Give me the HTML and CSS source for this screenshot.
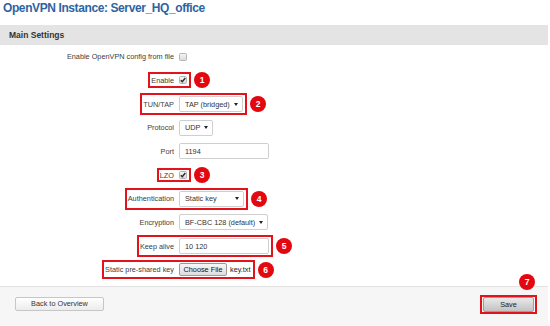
FILE: index.html
```html
<!DOCTYPE html>
<html lang="en">
<head>
    <meta charset="UTF-8">
    <title>OpenVPN Instance: Server_HQ_office</title>
    <link rel="stylesheet" href="styles.css">
</head>
<body>
    <div class="page">
        <h1 class="title">OpenVPN Instance: Server_HQ_office</h1>
        <div class="section-head">Main Settings</div>

        <div class="fields">
            <div class="row">
                <div class="pair">
                    <div class="lbl"><span>Enable OpenVPN config from file</span></div>
                    <div class="ctl"><span class="cb"></span></div>
                </div>
            </div>

            <div class="row hl">
                <div class="pair">
                    <div class="lbl"><span>Enable</span></div>
                    <div class="ctl tall"><span class="cb on"><svg viewBox="0 0 8 8"><path d="M1.8 4.3 L3.3 5.8 L6.3 2"/></svg></span></div>
                </div>
                <span class="badge">1</span>
            </div>

            <div class="row hl">
                <div class="pair">
                    <div class="lbl"><span>TUN/TAP</span></div>
                    <div class="ctl"><div class="sel w-tun"><span>TAP (bridged)</span><i class="caret"></i></div></div>
                </div>
                <span class="badge">2</span>
            </div>

            <div class="row">
                <div class="pair">
                    <div class="lbl"><span>Protocol</span></div>
                    <div class="ctl"><div class="sel w-proto"><span>UDP</span><i class="caret"></i></div></div>
                </div>
            </div>

            <div class="row">
                <div class="pair">
                    <div class="lbl"><span>Port</span></div>
                    <div class="ctl"><div class="txt">1194</div></div>
                </div>
            </div>

            <div class="row hl">
                <div class="pair">
                    <div class="lbl"><span>LZO</span></div>
                    <div class="ctl"><span class="cb on"><svg viewBox="0 0 8 8"><path d="M1.8 4.3 L3.3 5.8 L6.3 2"/></svg></span></div>
                </div>
                <span class="badge">3</span>
            </div>

            <div class="row hl">
                <div class="pair">
                    <div class="lbl"><span>Authentication</span></div>
                    <div class="ctl"><div class="sel w-auth"><span>Static key</span><i class="caret"></i></div></div>
                </div>
                <span class="badge">4</span>
            </div>

            <div class="row">
                <div class="pair">
                    <div class="lbl"><span>Encryption</span></div>
                    <div class="ctl"><div class="sel w-enc"><span>BF-CBC 128 (default)</span><i class="caret"></i></div></div>
                </div>
            </div>

            <div class="row hl">
                <div class="pair">
                    <div class="lbl"><span>Keep alive</span></div>
                    <div class="ctl"><div class="txt">10 120</div></div>
                </div>
                <span class="badge">5</span>
            </div>

            <div class="row hl">
                <div class="pair">
                    <div class="lbl"><span>Static pre-shared key</span></div>
                    <div class="ctl"><span class="file-btn">Choose File</span><span class="file-name">key.txt</span></div>
                </div>
                <span class="badge">6</span>
            </div>
        </div>

        <div class="footer">
            <span class="btn">Back to Overview</span>
            <div class="save-box">
                <span class="btn btn-save">Save</span>
                <span class="badge badge-save">7</span>
            </div>
        </div>
    </div>
</body>
</html>
```

FILE: styles.css
```css
body {
    margin: 0;
    padding: 0;
    background-color: #fff;
    font-family: "Liberation Sans", Arial, sans-serif;
    color: #404040;
}
.page {
    width: 548px;
}
.title {
    margin: 0;
    height: 25px;
    padding-left: 3px;
    font-size: 12px;
    line-height: 16px;
    letter-spacing: -0.4px;
    font-weight: bold;
    color: #2d64a2;
}
.section-head {
    height: 20px;
    line-height: 20px;
    padding-left: 9px;
    background-color: #e4e4e4;
    font-size: 8.5px;
    font-weight: bold;
    color: #333;
}
.fields {
    display: grid;
    grid-auto-rows: 23.67px;
}
.row {
    display: flex;
    align-items: center;
    font-size: 7.3px;
}
.pair {
    display: flex;
    align-items: stretch;
}
.lbl {
    width: 179px;
    flex-shrink: 0;
    display: flex;
    justify-content: flex-end;
}
.lbl span {
    display: flex;
    align-items: center;
    padding-right: 5px;
    white-space: nowrap;
}
.ctl {
    display: flex;
    align-items: center;
    gap: 3px;
}
.hl .lbl span {
    border: 2px solid #e3131b;
    border-right: none;
    padding-left: 1px;
}
.hl .ctl {
    border: 2px solid #e3131b;
    border-left: none;
    padding: 1px 2px 1px 0;
}
.hl .ctl.tall {
    padding: 2px 2px 2px 0;
}
.badge {
    width: 16px;
    height: 16px;
    margin-left: 3px;
    border-radius: 50%;
    background-color: #e3070f;
    color: #fff;
    font-size: 8.5px;
    font-weight: bold;
    display: flex;
    align-items: center;
    justify-content: center;
    flex-shrink: 0;
}

/* checkbox */
.cb {
    width: 8px;
    height: 8px;
    box-sizing: border-box;
    border: 1px solid #b4b4b4;
    border-radius: 1.5px;
    background: linear-gradient(#f4f4f4, #dcdcdc);
    display: block;
}
.cb svg {
    display: block;
    width: 8px;
    height: 8px;
    margin: -1px 0 0 -1px;
}
.cb svg path {
    fill: none;
    stroke: #2a2a2a;
    stroke-width: 1.4;
}

/* select */
.sel {
    height: 16px;
    box-sizing: border-box;
    border: 1px solid #cfcfcf;
    border-radius: 2px;
    background-color: #fff;
    padding: 0 4px 0 5px;
    display: flex;
    align-items: center;
    justify-content: space-between;
    color: #333;
    white-space: nowrap;
}
.caret {
    width: 0;
    height: 0;
    border-left: 2px solid transparent;
    border-right: 2px solid transparent;
    border-top: 3px solid #222;
    margin-left: 4px;
}
.w-tun { width: 64px; }
.w-proto { width: 34px; }
.w-auth { width: 65px; }
.w-enc { width: 89px; }

/* text input */
.txt {
    width: 90px;
    height: 16px;
    box-sizing: border-box;
    border: 1px solid #cfcfcf;
    border-radius: 2px;
    padding-left: 5px;
    display: flex;
    align-items: center;
    color: #333;
}

/* file */
.file-btn {
    height: 13px;
    width: 48px;
    box-sizing: border-box;
    border: 1px solid #9a9a9a;
    border-radius: 2px;
    background: linear-gradient(#f6f6f6, #dedede);
    display: flex;
    align-items: center;
    justify-content: center;
    color: #111;
}
.file-name {
    color: #222;
}

/* footer */
.footer {
    margin-top: 4px;
    height: 40px;
    box-sizing: border-box;
    border-top: 1px solid #e2e2e2;
    background-color: #f6f6f6;
    padding: 8px 11px 0 15px;
    display: flex;
    justify-content: space-between;
    align-items: flex-start;
}
.btn {
    height: 14px;
    width: 89px;
    box-sizing: border-box;
    margin-top: 2px;
    border: 1px solid #c6c6c6;
    border-radius: 2px;
    background: linear-gradient(#ffffff, #ececec);
    font-size: 7.3px;
    color: #333;
    display: flex;
    align-items: center;
    justify-content: center;
}
.save-box {
    position: relative;
    border: 2px solid #e3131b;
    padding: 0 1px;
}
.btn-save {
    margin-top: 0;
    width: 51px;
    height: 15px;
    border-color: #9d9d9d;
    background: linear-gradient(#e9e9e9, #c2c2c2);
    color: #222;
}
.badge-save {
    position: absolute;
    left: 37px;
    top: -23px;
    margin-left: 0;
}
```
